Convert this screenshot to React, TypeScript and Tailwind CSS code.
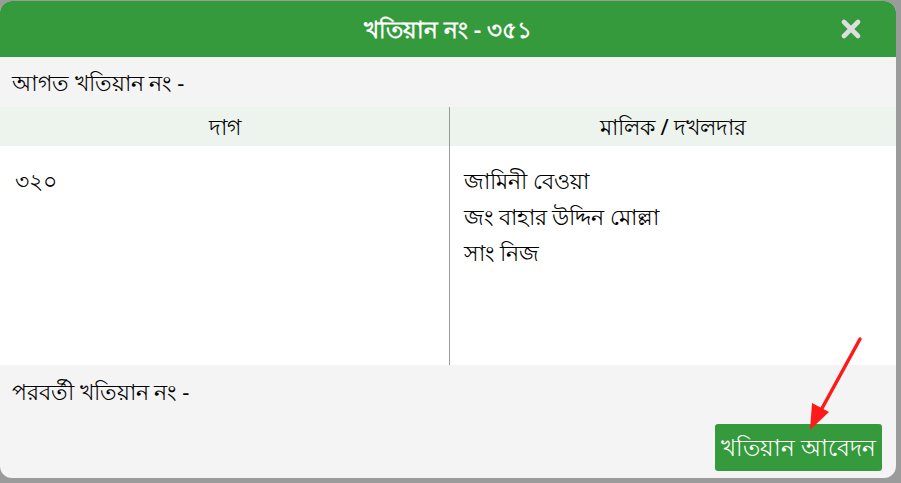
import { X } from "lucide-react";

const owners = ["জামিনী বেওয়া", "জং বাহার উদ্দিন মোল্লা", "সাং নিজ"];

const App = () => {
  return (
    <div
      className="w-[901px] h-[483px] bg-[#9b9b9b] pt-px pr-[5px] pb-[5px]"
      style={{ fontFamily: '"Noto Sans", "Liberation Sans", sans-serif' }}
    >
      <div className="h-full bg-[#f4f4f4] rounded-[12px] overflow-hidden flex flex-col">
        <div className="h-[56px] bg-[#359a3b] flex items-center relative shrink-0">
          <h2 className="flex-1 text-center text-white text-[23px] font-semibold">খতিয়ান নং - ৩৫১</h2>
          <X className="absolute right-[31px] top-[14px] w-[28px] h-[28px] text-[#dedede]" strokeWidth={4} />
        </div>

        <div className="h-[50px] flex items-center px-3 text-[22px] text-black shrink-0">আগত খতিয়ান নং -</div>

        <div className="grid grid-cols-[450px_1fr] shrink-0">
          <div className="h-[39px] bg-[#edf4ed] flex items-center justify-center text-[22px] border-r border-[#9a9a9a]">দাগ</div>
          <div className="h-[39px] bg-[#edf4ed] flex items-center justify-center text-[22px]">মালিক / দখলদার</div>
          <div className="h-[219px] bg-white border-r border-[#9a9a9a] px-[15px] pt-[18px] text-[22px]">৩২০</div>
          <div className="h-[219px] bg-white pl-[14px] pt-[16px] text-[22px] leading-[36px]">
            {owners.map((o) => (
              <div key={o}>{o}</div>
            ))}
          </div>
        </div>

        <div className="flex-1 flex flex-col px-3 relative">
          <p className="pt-[10px] text-[22px]">পরবর্তী খতিয়ান নং -</p>
          <div className="flex-1 flex items-end justify-end pb-[7px] pr-[2px]">
            <button className="h-[47px] px-[6px] bg-[#359a3b] text-white text-[23px] font-medium rounded-[3px]">
              খতিয়ান আবেদন
            </button>
          </div>
        </div>
      </div>

      <svg className="absolute left-0 top-0 pointer-events-none" width="901" height="483">
        <line x1="860" y1="339" x2="820" y2="412" stroke="#ff1a1a" strokeWidth="3.5" strokeLinecap="round" />
        <polygon points="810,430 812,403 829,412" fill="#ff1a1a" />
      </svg>
    </div>
  );
};

export default App;
